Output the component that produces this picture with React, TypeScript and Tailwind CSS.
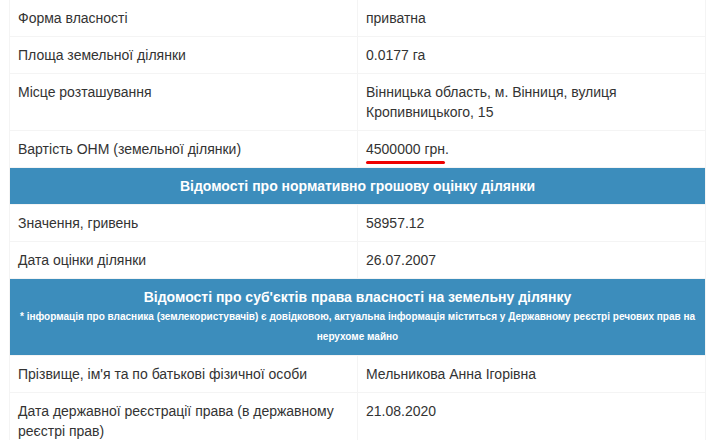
const rowsTop = [
  { label: "Форма власності", value: "приватна" },
  { label: "Площа земельної ділянки", value: "0.0177 га" },
  { label: "Місце розташування", value: "Вінницька область, м. Вінниця, вулиця Кропивницького, 15" },
]

const rowsNgo = [
  { label: "Значення, гривень", value: "58957.12" },
  { label: "Дата оцінки ділянки", value: "26.07.2007" },
]

const rowsOwner = [
  { label: "Прізвище, ім'я та по батькові фізичної особи", value: "Мельникова Анна Ігорівна" },
  { label: "Дата державної реєстрації права (в державному реєстрі прав)", value: "21.08.2020" },
]

function Row({ label, value }: { label: string; value: React.ReactNode }) {
  return (
    <tr>
      <td className="w-[348px] border border-[#f4f4f4] p-2 align-top">{label}</td>
      <td className="w-[348px] border border-[#f4f4f4] p-2 align-top">{value}</td>
    </tr>
  )
}

function Header({ children }: { children: React.ReactNode }) {
  return (
    <tr>
      <td colSpan={2} className="border border-[#f4f4f4] bg-[#3c8dbc] p-2 text-center font-bold text-white">
        {children}
      </td>
    </tr>
  )
}

export default function App() {
  return (
    <div className="h-[440px] w-[712px] overflow-hidden bg-white pl-[9px] font-['Liberation_Sans',Arial,sans-serif] text-[14px] leading-5 text-[#333]">
      <table className="-mt-px w-[696px] table-fixed border-collapse">
        <tbody>
          {rowsTop.map((r) => (
            <Row key={r.label} {...r} />
          ))}
          <Row
            label="Вартість ОНМ (земельної ділянки)"
            value={
              <span className="relative inline-block">
                4500000 грн.
                {/* red marker line */}
                <span className="absolute left-0 top-[22px] h-[3px] w-[79px] rounded-full bg-[#ee0000]" />
              </span>
            }
          />
          <Header>Відомості про нормативно грошову оцінку ділянки</Header>
          {rowsNgo.map((r) => (
            <Row key={r.label} {...r} />
          ))}
          <Header>
            <div>Відомості про суб'єктів права власності на земельну ділянку</div>
            <div className="text-[10px] leading-5">
              * інформація про власника (землекористувачів) є довідковою, актуальна інформація міститься у Державному реєстрі речових прав на нерухоме майно
            </div>
          </Header>
          {rowsOwner.map((r) => (
            <Row key={r.label} {...r} />
          ))}
        </tbody>
      </table>
    </div>
  )
}
